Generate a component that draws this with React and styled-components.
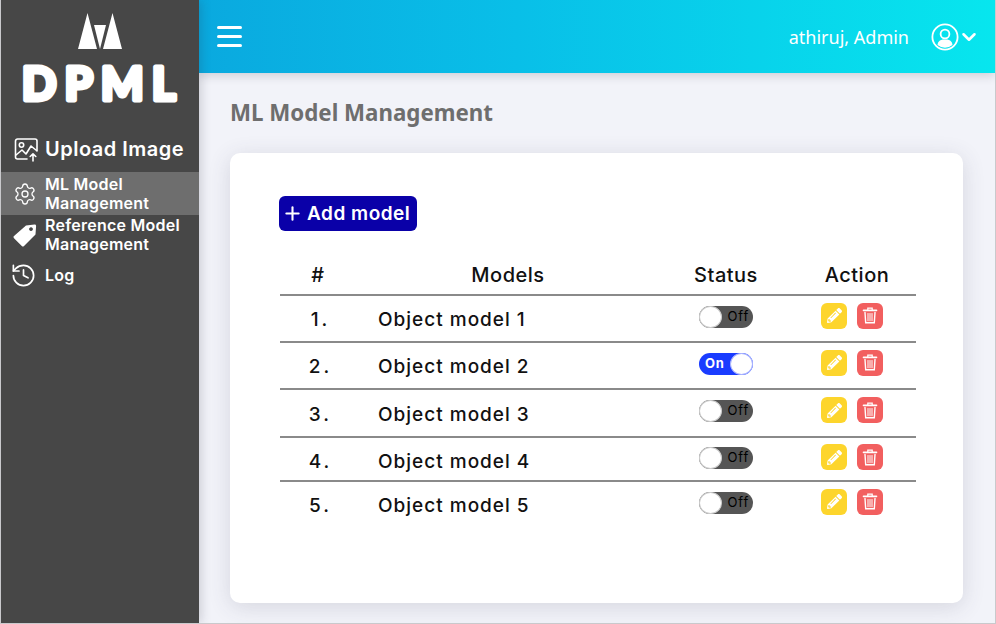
import styled, { createGlobalStyle } from "styled-components";
import { Settings, History, ChevronDown, Plus } from "lucide-react";
import { FaPencilAlt } from "react-icons/fa";

const modelos = [
    { id: 1, nome: "Object model 1", ligado: false, altura: 47, topo: 0 },
    { id: 2, nome: "Object model 2", ligado: true, altura: 47, topo: 0 },
    { id: 3, nome: "Object model 3", ligado: false, altura: 48, topo: 0 },
    { id: 4, nome: "Object model 4", ligado: false, altura: 44, topo: 2 },
    { id: 5, nome: "Object model 5", ligado: false, altura: 45, topo: 0 },
];

export default function App() {
    return (
        <Pagina>
            <Global />
            <Sidebar>
                <Logo>
                    <svg width="44" height="37" viewBox="0 0 44 37">
                        <path d="M9.5 0 L19 36 L0 36 Z M34.5 0 L44 36 L25 36 Z" fill="#fff" />
                        <path d="M16 12 L28 12 L22 36 Z" fill="#fff" />
                    </svg>
                    <LogoTexto width="190" height="64" viewBox="0 0 190 64">
                        <text x="98" y="50" textAnchor="middle">DPML</text>
                    </LogoTexto>
                </Logo>
                <Menu>
                    <UploadItem>
                        <svg width="25" height="25" viewBox="0 0 25 25" fill="none" stroke="#fff" strokeWidth="1.6" strokeLinecap="round" strokeLinejoin="round">
                            <path d="M13 22 H3.5 a2 2 0 0 1 -2 -2 V4 a2 2 0 0 1 2 -2 H21 a2 2 0 0 1 2 2 V14" />
                            <circle cx="7.5" cy="8" r="2.2" />
                            <path d="M2 18 L8 13 L12 17 L17 9 L22.5 13.5" />
                            <path d="M19 24 V17 M16.2 19.5 L19 16.8 L21.8 19.5" />
                        </svg>
                        Upload Image
                    </UploadItem>
                    <Item $ativo>
                        <Settings size={24} strokeWidth={1.3} />
                        <span>ML Model<br />Management</span>
                    </Item>
                    <Item>
                        <svg width="24" height="24" viewBox="0 0 24 24">
                            <path fillRule="evenodd" fill="#fff" d="M13 2.5 L21.5 1.5 a1.5 1.5 0 0 1 1.6 1.6 L22.5 11.5 L11 23 a1.6 1.6 0 0 1 -2.2 0 L1 15.2 a1.6 1.6 0 0 1 0 -2.2 Z M18 4.2 a1.9 1.9 0 1 0 0.01 0 Z" />
                        </svg>
                        <span>Reference Model<br />Management</span>
                    </Item>
                    <LogItem>
                        <History size={27} strokeWidth={1.5} />
                        <span>Log</span>
                    </LogItem>
                </Menu>
            </Sidebar>
            <Direita>
                <Topo>
                    <Hamburguer>
                        <i /><i /><i />
                    </Hamburguer>
                    <Usuario>
                        <span>athiruj, Admin</span>
                        <svg width="28" height="28" viewBox="0 0 28 28">
                            <circle cx="14" cy="14" r="12.6" fill="none" stroke="#fff" strokeWidth="1.8" />
                            <circle cx="14" cy="11" r="4.4" fill="none" stroke="#fff" strokeWidth="1.8" />
                            <path d="M6.5 22 C7 17.5 10 17 11.5 16.5 L16.5 16.5 C18 17 21 17.5 21.5 22 A12 12 0 0 1 6.5 22 Z" fill="#fff" />
                        </svg>
                        <ChevronDown size={22} strokeWidth={2.8} />
                    </Usuario>
                </Topo>
                <Conteudo>
                    <Titulo>ML Model Management</Titulo>
                    <Card>
                        <BotaoAdd><Plus size={21} strokeWidth={2.4} />Add model</BotaoAdd>
                        <Tabela>
                            <Cabecalho>
                                <span>#</span>
                                <span>Models</span>
                                <span>Status</span>
                                <AcaoTitulo>Action</AcaoTitulo>
                            </Cabecalho>
                            {modelos.map((m) => (
                                <Linha key={m.id} $altura={m.altura} $topo={m.topo}>
                                    <Numero>{m.id}.</Numero>
                                    <Nome>{m.nome}</Nome>
                                    <Celula>
                                        <Toggle $ligado={m.ligado}>
                                            <small>{m.ligado ? "On" : "Off"}</small>
                                            <i />
                                        </Toggle>
                                    </Celula>
                                    <Acoes>
                                        <BotaoIcone $cor="#fdd52c"><FaPencilAlt size={15} /></BotaoIcone>
                                        <BotaoIcone $cor="#f25f5f">
                                            <svg width="16" height="17" viewBox="0 0 16 17" fill="none" stroke="#fff" strokeLinecap="round">
                                                <path d="M1.5 3.4 H14.5" strokeWidth="1.6" />
                                                <path d="M5.8 3 V1.2 H10.2 V3" strokeWidth="1.2" />
                                                <path d="M3 5.5 L3.7 15.8 H12.3 L13 5.5" strokeWidth="1.4" />
                                                <path d="M6 6.5 V13.8 M8 6.5 V13.8 M10 6.5 V13.8" strokeWidth="1" />
                                            </svg>
                                        </BotaoIcone>
                                    </Acoes>
                                </Linha>
                            ))}
                        </Tabela>
                    </Card>
                </Conteudo>
            </Direita>
        </Pagina>
    );
}

const Global = createGlobalStyle`
    * {
        box-sizing: border-box;
    }
    body {
        margin: 0;
        font-family: "Inter", sans-serif;
    }
`;
const Pagina = styled.div`
    display: flex;
    width: 996px;
    height: 624px;
    overflow: hidden;
    border: 1px solid #c9c9cc;
    border-top: none;
    background-color: #f2f3f9;
`;
const Sidebar = styled.aside`
    width: 198px;
    flex-shrink: 0;
    background-color: #474747;
    color: #fff;
    position: relative;
    z-index: 2;
    box-shadow: 2px 0 10px rgba(40, 40, 60, 0.2);
`;
const Logo = styled.div`
    display: flex;
    flex-direction: column;
    align-items: center;
    padding-top: 13px;
    height: 130px;
`;
const LogoTexto = styled.svg`
    flex-shrink: 0;
    text {
        font-family: "Lato", sans-serif;
        font-weight: 700;
        font-size: 45px;
        letter-spacing: 8.5px;
        fill: #fff;
        stroke: #fff;
        stroke-width: 5px;
        stroke-linejoin: round;
    }
`;
const Menu = styled.nav`
    display: flex;
    flex-direction: column;
`;
const Item = styled.div`
    display: flex;
    align-items: center;
    gap: 8px;
    height: ${props => props.$ativo ? "43px" : "40px"};
    padding-left: 12px;
    font-size: 16px;
    font-weight: 600;
    line-height: 19px;
    letter-spacing: 0.25px;
    background-color: ${props => props.$ativo ? "#6e6e6e" : "transparent"};
    svg {
        flex-shrink: 0;
    }
`;
const UploadItem = styled(Item)`
    height: 42px;
    padding-bottom: 4px;
    font-size: 20px;
    font-weight: 600;
    letter-spacing: 0.5px;
    gap: 6px;
    padding-left: 13px;
`;
const LogItem = styled(Item)`
    padding-left: 9px;
    padding-bottom: 1px;
    height: 40px;
    margin-top: 1px;
`;
const Direita = styled.div`
    flex: 1;
    display: flex;
    flex-direction: column;
    min-width: 0;
`;
const Topo = styled.header`
    height: 73px;
    display: flex;
    align-items: center;
    justify-content: space-between;
    padding: 0 18px;
    background: linear-gradient(90deg, #0aa9df 0%, #09bfe8 40%, #07e6ee 100%);
    box-shadow: 0 2px 10px rgba(40, 40, 60, 0.2);
    position: relative;
    z-index: 1;
`;
const Hamburguer = styled.div`
    display: flex;
    flex-direction: column;
    gap: 6px;
    i {
        display: block;
        width: 25px;
        height: 3px;
        border-radius: 2px;
        background-color: #fff;
    }
`;
const Usuario = styled.div`
    display: flex;
    align-items: center;
    color: #fff;
    font-family: "Noto Sans", sans-serif;
    font-size: 18px;
    span {
        margin-right: 22px;
    }
    svg:last-child {
        margin-left: -1px;
        margin-right: -3px;
    }
`;
const Conteudo = styled.main`
    flex: 1;
    padding: 25px 32px 20px 31px;
`;
const Titulo = styled.h1`
    margin: 0 0 25px 0;
    font-family: "Noto Sans", sans-serif;
    font-size: 22.3px;
    line-height: 30px;
    font-weight: 700;
    color: #6e6e6e;
`;
const Card = styled.section`
    width: 733px;
    height: 450px;
    background-color: #fff;
    border-radius: 10px;
    padding: 43px 47px 0 49px;
    box-shadow: 0 4px 22px rgba(60, 60, 90, 0.16);
`;
const BotaoAdd = styled.button`
    display: flex;
    align-items: center;
    gap: 4px;
    width: 138px;
    height: 35px;
    padding: 0 3px;
    border: none;
    border-radius: 6px;
    background-color: #0a00a8;
    color: #fff;
    font-family: "Inter", sans-serif;
    font-size: 19px;
    font-weight: 600;
    letter-spacing: 0.5px;
    white-space: nowrap;
`;
const colunas = "76px 304px 132px 124px";
const Tabela = styled.div`
    margin-top: 31px;
    margin-left: 1px;
    width: 636px;
`;
const Cabecalho = styled.div`
    display: grid;
    grid-template-columns: ${colunas};
    height: 34px;
    align-items: center;
    padding-bottom: 6px;
    border-bottom: 2px solid #8a8a8a;
    text-align: center;
    font-size: 20px;
    font-weight: 500;
    letter-spacing: 0.5px;
    color: #111;
`;
const AcaoTitulo = styled.span`
    padding-left: 6px;
`;
const Linha = styled.div`
    display: grid;
    grid-template-columns: ${colunas};
    height: ${props => props.$altura}px;
    padding-top: ${props => props.$topo}px;
    align-items: center;
    border-bottom: 2px solid #8a8a8a;
    color: #111;
    &:last-child {
        border-bottom: none;
    }
`;
const Numero = styled.div`
    text-align: center;
    font-size: 19px;
    font-weight: 500;
    letter-spacing: 3px;
    padding-top: 2px;
    padding-left: 5px;
`;
const Nome = styled.div`
    padding-left: 22px;
    padding-top: 2px;
    font-size: 19px;
    font-weight: 500;
    letter-spacing: 1px;
`;
const Celula = styled.div`
    display: flex;
    justify-content: center;
    padding-bottom: 4px;
`;
const Toggle = styled.div`
    display: flex;
    align-items: center;
    flex-direction: ${props => props.$ligado ? "row" : "row-reverse"};
    justify-content: space-between;
    width: 54px;
    height: 22px;
    border-radius: 11px;
    background-color: ${props => props.$ligado ? "#1a3cff" : "#555"};
    small {
        font-size: 13px;
        font-weight: ${props => props.$ligado ? 700 : 400};
        letter-spacing: 0.8px;
        color: ${props => props.$ligado ? "#fff" : "#000"};
        padding: ${props => props.$ligado ? "0 0 2px 6px" : "0 4px 2px 0"};
    }
    i {
        width: 23px;
        height: 22px;
        border-radius: 50%;
        background-color: #fff;
        border: 1px solid ${props => props.$ligado ? "#aab4ff" : "#ccc"};
    }
`;
const Acoes = styled.div`
    display: flex;
    justify-content: center;
    gap: 10px;
    padding-bottom: 6px;
    padding-right: 4px;
`;
const BotaoIcone = styled.div`
    display: flex;
    align-items: center;
    justify-content: center;
    width: 26px;
    height: 26px;
    border-radius: 6px;
    background-color: ${props => props.$cor};
    color: #fff;
`;
